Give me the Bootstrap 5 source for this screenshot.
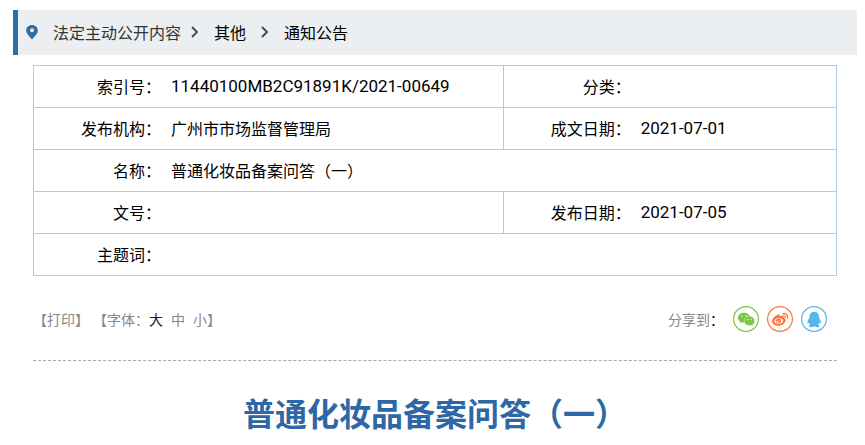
<!DOCTYPE html>
<html lang="zh-CN">
<head>
<meta charset="utf-8">
<meta name="viewport" content="width=device-width, initial-scale=1">
<title>普通化妆品备案问答（一）</title>
<link href="https://cdn.jsdelivr.net/npm/bootstrap@5.3.0/dist/css/bootstrap.min.css" rel="stylesheet">
<style>
body { font: 16px/24px "Noto Sans CJK SC", sans-serif; color: #000; background: #fff; }
a { color: inherit; text-decoration: none; }
.page { padding: 10px 8px 0 13px; }
.crumb-bar { border-left: 5px solid #2f6ea5; background: #ebeff2; height: 45px; padding: 0 0 2px 8px; }
.crumb-bar .pin { width: 12px; height: 16px; margin-right: 15px; }
.crumb-bar .first { color: #333; }
.crumb-bar .arrow { width: 8px; height: 12px; margin: 0 15px; }
.crumb-bar .first + .arrow { margin-left: 10px; }
.inner { padding: 10px 20px 0; }
.info { table-layout: fixed; border-collapse: collapse; }
.info th, .info td { border: 1px solid #afcbe3; height: 42px; padding: 0 0 2px; font-weight: 400; vertical-align: middle; }
.info th { border-right: 0; text-align: right; padding-right: 1px; }
.info td { border-left: 0; padding-left: 9px; }
.info .c-label { width: 16%; }
.info .c-value { width: 42.5%; }
.num { font-family: Roboto, sans-serif; font-size: 17px; }
.tools { font-size: 14px; color: #888; padding: 30px 10px 28px 0; border-bottom: 1px dashed #aaa; }
.tools button { border: 0; background: none; padding: 0; color: inherit; }
.tools .sizes { margin-left: 4px; }
.tools .sizes button.on { color: #222; }
.share-label { margin-right: 1px; }
.share-label span { color: #000; }
.tools .share-btn { width: 26px; height: 26px; }
.share-btn svg { display: block; }
h1 { font-size: 32px; line-height: 48px; font-weight: 700; color: #2d67a6; margin: 27px 0 0; }
</style>
</head>
<body>
<main class="page">
  <nav class="crumb-bar d-flex align-items-center" aria-label="当前位置">
    <svg class="pin" viewBox="0 0 12 16" aria-hidden="true"><path fill="#2f6ea5" fill-rule="evenodd" d="M6 1C2.700 1 .2 3.300.2 6.400.2 9.700 3.800 12.500 6 15.500 8.200 12.500 11.800 9.700 11.800 6.400 11.800 3.300 9.300 1 6 1ZM6 4.200a2 2 0 1 1 0 4 2 2 0 0 1 0-4Z"/></svg>
    <a class="first" href="#">法定主动公开内容</a>
    <svg class="arrow" viewBox="0 0 8 12" fill="none" stroke="#444" stroke-width="1.800" aria-hidden="true"><path d="M1 1l5 5-5 5"/></svg>
    <a href="#">其他</a>
    <svg class="arrow" viewBox="0 0 8 12" fill="none" stroke="#444" stroke-width="1.800" aria-hidden="true"><path d="M1 1l5 5-5 5"/></svg>
    <a href="#">通知公告</a>
  </nav>
  <div class="inner">
    <table class="info w-100">
      <colgroup><col class="c-label"><col class="c-value"><col class="c-label"><col></colgroup>
      <tbody>
        <tr><th scope="row">索引号：</th><td><span class="num">11440100MB2C91891K/2021-00649</span></td><th scope="row">分类：</th><td></td></tr>
        <tr><th scope="row">发布机构：</th><td>广州市市场监督管理局</td><th scope="row">成文日期：</th><td><span class="num">2021-07-01</span></td></tr>
        <tr><th scope="row">名称：</th><td colspan="3">普通化妆品备案问答（一）</td></tr>
        <tr><th scope="row">文号：</th><td></td><th scope="row">发布日期：</th><td><span class="num">2021-07-05</span></td></tr>
        <tr><th scope="row">主题词：</th><td colspan="3"></td></tr>
      </tbody>
    </table>
    <div class="tools d-flex justify-content-between align-items-center">
      <div class="d-flex">
        <button type="button">【打印】</button>
        <div class="sizes d-flex gap-2"><span>【字体：<button type="button" class="on">大</button></span><button type="button">中</button><span><button type="button">小</button>】</span></div>
      </div>
      <div class="d-flex align-items-center gap-2">
        <div class="share-label">分享到<span>：</span></div>
        <button type="button" class="share-btn" aria-label="微信"><svg width="26" height="26" viewBox="0 0 26 26"><circle cx="13" cy="13" r="12.400" fill="#fff" stroke="#7bc549" stroke-width="1.200"/><g fill="#7bc549"><path d="M11 6.800c-3.300 0-6 2.100-6 4.900 0 1.600.9 2.900 2.200 3.800l-.6 1.900 2.300-1.100c.7.2 1.400.3 2.100.3 3.300 0 6-2.100 6-4.900s-2.700-4.900-6-4.900Z"/><path stroke="#fff" stroke-width=".4" d="M16.400 10.300c-3 0-5.200 2-5.200 4.600s2.300 4.700 5.200 4.700c.6 0 1.200-.1 1.800-.3l1.900 1.100-.5-1.800c1.300-.8 2-2.100 2-3.700 0-2.600-2.300-4.600-5.200-4.600Z"/></g><g fill="#fff"><circle cx="9" cy="10" r=".7"/><circle cx="13" cy="9.800" r=".7"/><circle cx="14.800" cy="13.600" r=".7"/><circle cx="18" cy="13.600" r=".7"/></g></svg></button>
        <button type="button" class="share-btn" aria-label="微博"><svg width="26" height="26" viewBox="0 0 26 26"><circle cx="13" cy="13" r="12.400" fill="#fff" stroke="#ff763b" stroke-width="1.200"/><path fill="#ff763b" fill-rule="evenodd" d="M11.300 8.500c1.300-.4 2.100.3 1.700 1.800 2-.8 4-.7 3.600 1.500 1.600.5 2.300 1.500 2 2.900-.5 2.800-3.800 5-7.400 5-3.500 0-6.200-1.800-6.200-4.500 0-2.700 3.400-5.900 6.300-6.700ZM11.700 12.300c-2.600.2-4.500 1.600-4.400 3.200s2 2.600 4.500 2.400 4.500-1.600 4.400-3.200-2-2.600-4.500-2.400Z"/><path fill="#ff763b" fill-rule="evenodd" d="M11.500 12.800c-2 .2-3.300 1.400-3 3 .3 1.400 1.600 2 3.200 1.700 1.700-.3 2.900-1.600 2.600-3-.2-1.200-1.300-1.900-2.800-1.700Zm-1 2.100a1 1 0 1 1 0 2 1 1 0 0 1 0-2Zm2-.8a.5.5 0 1 1 0 1 .5.5 0 0 1 0-1Z"/><g fill="none" stroke="#ff763b" stroke-linecap="round"><path stroke-width="1.300" d="M15.800 7.600c3-.6 5.200 1.700 4.500 4.500"/><path stroke-width="1.100" d="M16.200 9.800c1.400-.3 2.300.7 2 2"/></g></svg></button>
        <button type="button" class="share-btn" aria-label="QQ"><svg width="26" height="26" viewBox="0 0 26 26"><circle cx="13" cy="13" r="12.400" fill="#fff" stroke="#56b6e7" stroke-width="1.200"/><path fill="#56b6e7" d="M13.200 5.800c-3.100 0-4.800 2.100-4.800 5v1.200c-1 1.400-2.200 3.100-2 5.100.1.900.8.600 1.600-.6.200.8.600 1.500 1.200 2.100-.8.300-1.200.8-1.200 1.300 0 1.600 4 1.600 5.200.4 1.200 1.200 5.200 1.200 5.200-.4 0-.5-.4-1-1.200-1.300.6-.6 1-1.300 1.200-2.100.8 1.200 1.500 1.500 1.600.6.200-2-1-3.700-2-5.100v-1.200c0-2.900-1.700-5-4.800-5Z"/></svg></button>
      </div>
    </div>
    <h1 class="text-center">普通化妆品备案问答（一）</h1>
  </div>
</main>
<script src="https://cdn.jsdelivr.net/npm/bootstrap@5.3.0/dist/js/bootstrap.bundle.min.js"></script>
</body>
</html>
